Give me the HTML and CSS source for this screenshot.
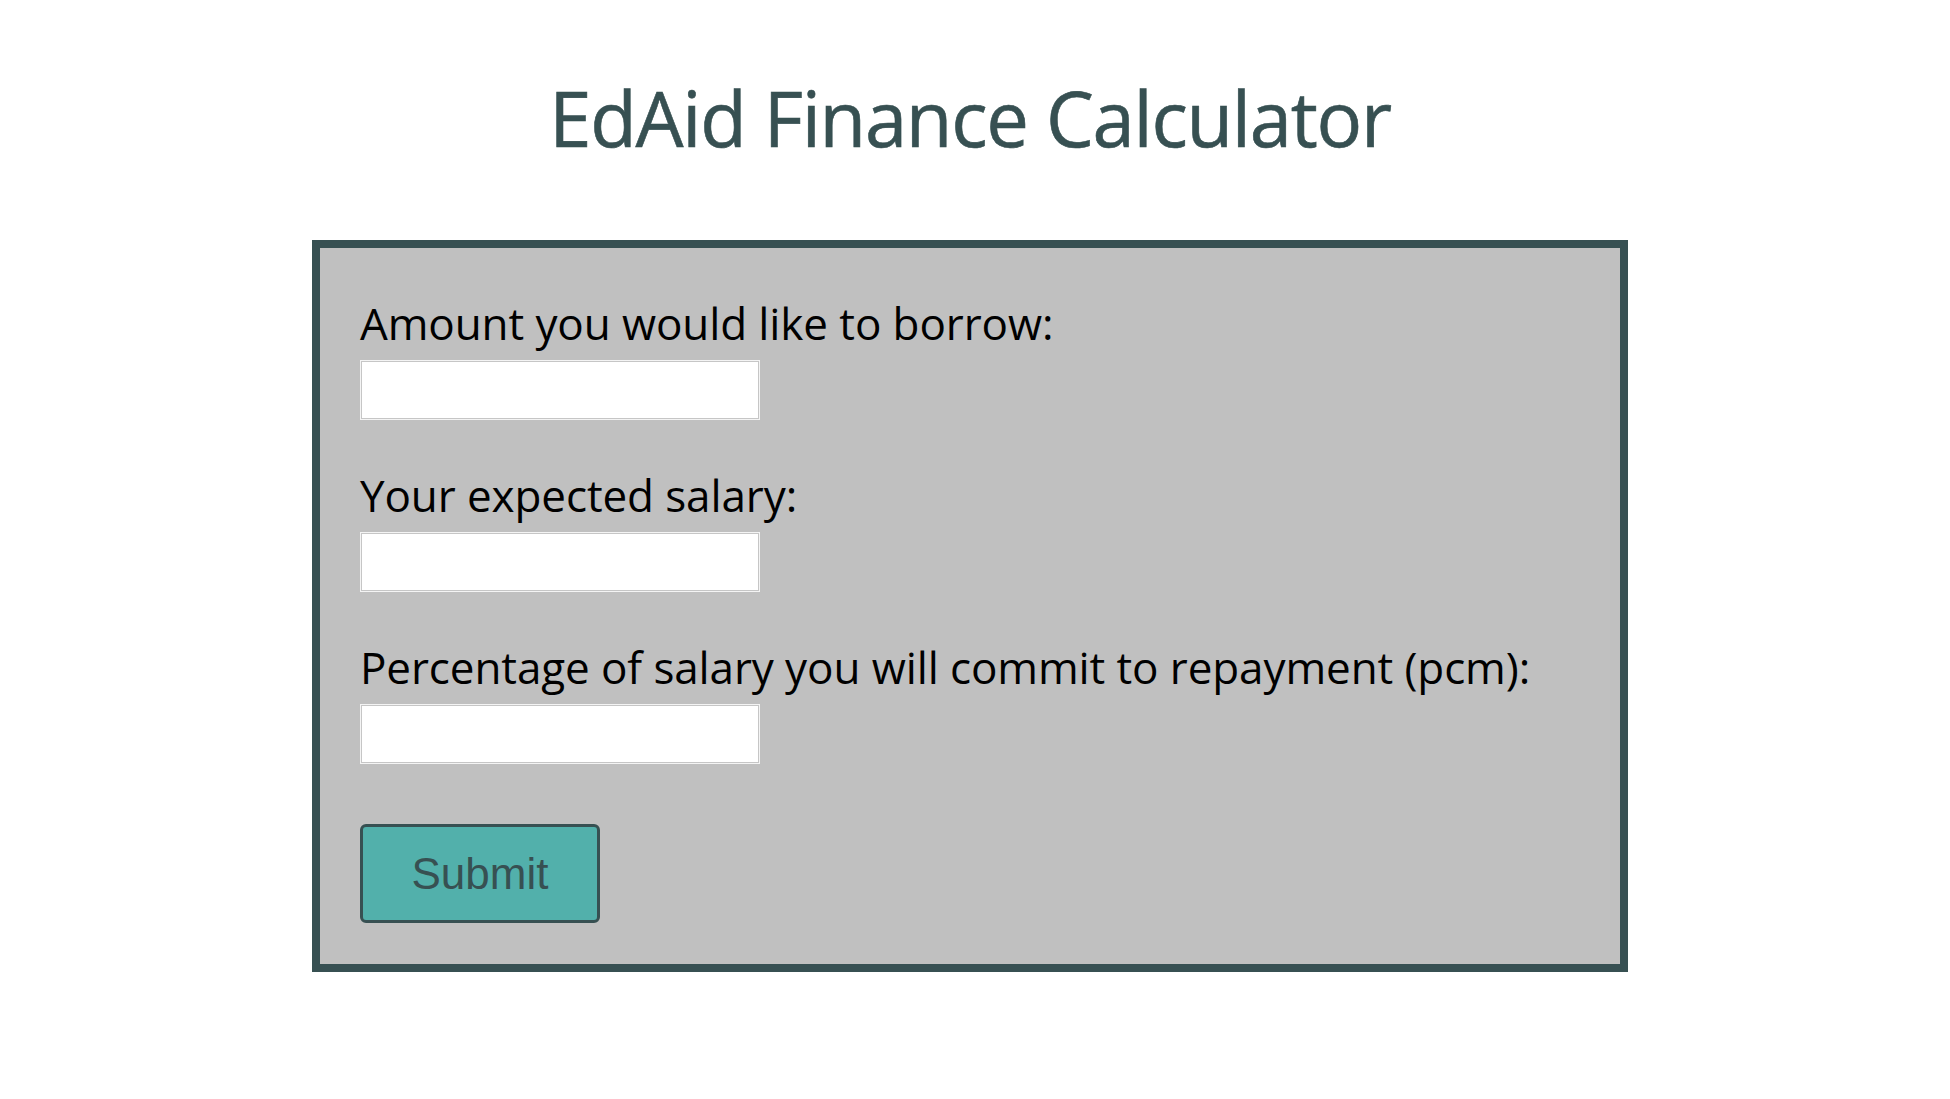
FILE: index.html
```html
<!DOCTYPE html>
<html lang="en">
<head>
<meta charset="utf-8">
<title>EdAid Finance Calculator</title>
<link rel="stylesheet" href="styles.css">
</head>
<body>
<main class="page">
  <h1 class="title">EdAid Finance Calculator</h1>
  <form class="calc">
    <div class="field">
      <label class="label" for="amount">Amount you would like to borrow:</label>
      <input class="input" id="amount" type="text">
    </div>
    <div class="field">
      <label class="label" for="salary">Your expected salary:</label>
      <input class="input" id="salary" type="text">
    </div>
    <div class="field">
      <label class="label" for="pct">Percentage of salary you will commit to repayment (pcm):</label>
      <input class="input" id="pct" type="text">
    </div>
    <button class="submit" type="button">Submit</button>
  </form>
</main>
</body>
</html>
```

FILE: styles.css
```css
html, body {
  margin: 0;
  padding: 0;
  background: #ffffff;
}

.page {
  width: 1940px;
  display: flex;
  flex-direction: column;
  align-items: center;
  padding-top: 72px;
  font-family: "Open Sans", "Noto Sans", sans-serif;
}

.title {
  margin: 0;
  font-size: 76px;
  font-weight: 400;
  line-height: 92px;
  color: #375052;
  letter-spacing: -1.3px;
  -webkit-text-stroke: 0.6px #375052;
}

.calc {
  box-sizing: border-box;
  width: 1316px;
  margin-top: 76px;
  border: 8px solid #375052;
  background: #c0c0c0;
  padding: 45px 40px 41px;
  display: flex;
  flex-direction: column;
  align-items: flex-start;
}

.field {
  display: flex;
  flex-direction: column;
  align-items: flex-start;
  margin-bottom: 45px;
}

.field:last-of-type {
  margin-bottom: 60px;
}

.label {
  font-size: 44px;
  line-height: 60px;
  color: #000000;
  margin-bottom: 7px;
  letter-spacing: -0.1px;
}

.input {
  box-sizing: border-box;
  width: 398px;
  height: 58px;
  margin: 1px;
  border: 1px solid #c6c6c6;
  box-shadow: 0 0 0 1px #f4f4f4;
  background: #ffffff;
  padding: 0 8px;
  font-size: 24px;
  outline: none;
}

.submit {
  box-sizing: border-box;
  width: 240px;
  height: 99px;
  border: 3px solid #375052;
  border-radius: 6px;
  background: #52b0ab;
  color: #375052;
  font-family: "Liberation Sans", Arial, sans-serif;
  font-size: 44px;
  padding: 0;
}
```
